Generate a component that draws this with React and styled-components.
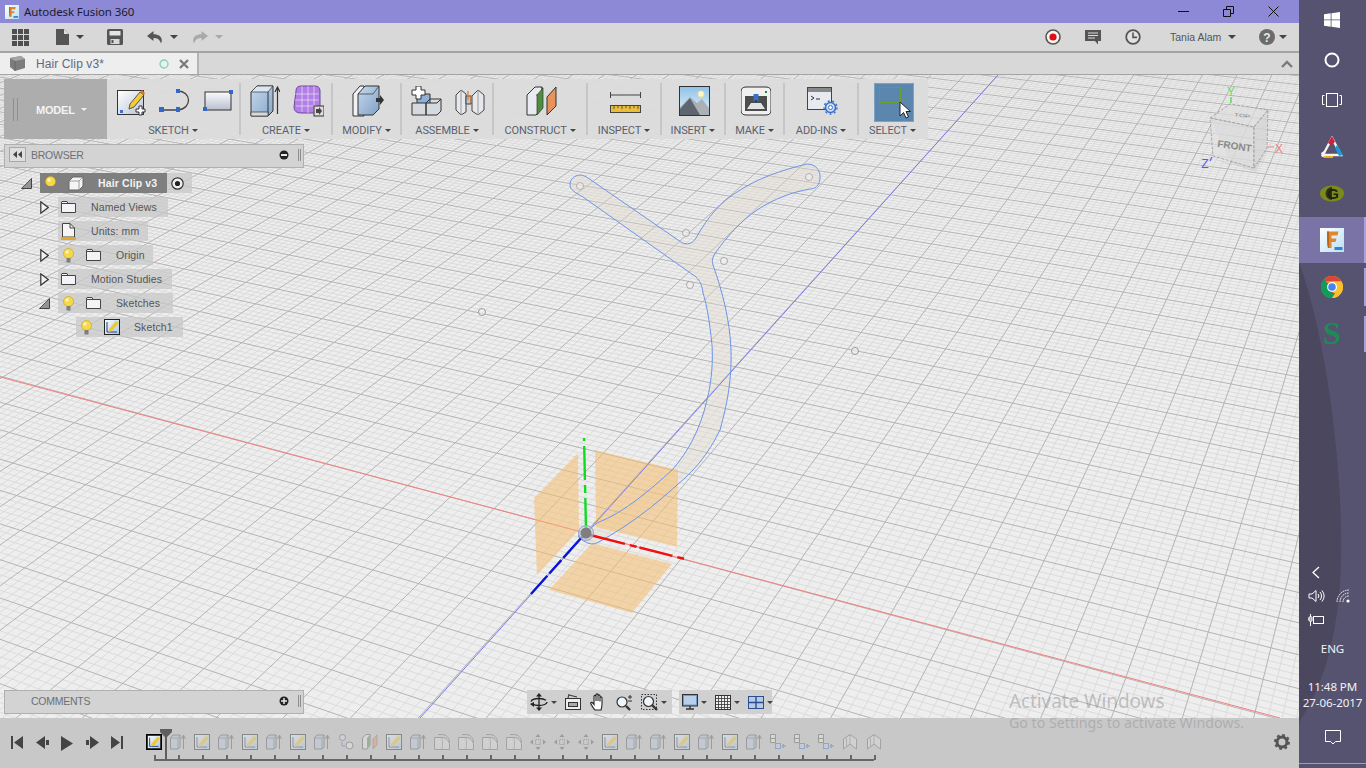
import React, { useMemo } from 'react';
import styled, { createGlobalStyle } from 'styled-components';

const Global = createGlobalStyle`
  html, body { margin: 0; padding: 0; width: 1366px; height: 768px; overflow: hidden; }
  #root { width: 1366px; height: 768px; }
  * { box-sizing: border-box; }
  svg { display: block; flex: none; }
`;

const Screen = styled.div`
  position: relative; width: 1366px; height: 768px; display: flex; overflow: hidden;
  font-family: "Liberation Sans", Arial, sans-serif; background: #eeeeee;
`;
const Main = styled.div`width: 1299px; height: 768px; display: flex; flex-direction: column; flex: none;`;
const TitleBar = styled.div`
  height: 23px; flex: none; background: #8d89d7; display: flex; align-items: center; padding: 0 0 0 5px;
`;
const TitleText = styled.span`
  margin-left: 5px; font-family: "Noto Sans", sans-serif; font-size: 11.5px; letter-spacing: -0.1px; color: #1b1b2a;
`;
const WindowButtons = styled.div`margin-left: auto; display: flex; gap: 34px; padding-right: 20px; align-items: center;`;
const MenuBar = styled.div`
  height: 30px; flex: none; background: #d8d8d8; border-bottom: 2px solid #a4a4a4; display: flex; align-items: center; padding: 0 10px 0 12px;
`;
const MenuGroup = styled.div`
  display: flex; align-items: center; gap: ${p => p.$gap || 6}px; margin-left: ${p => p.$ml || 0}px;
`;
const Caret = styled.i`
  display: block; width: 0; height: 0; flex: none; border-left: ${p => p.$s || 4}px solid transparent; border-right: ${p => p.$s || 4}px solid transparent;
  border-top: ${p => p.$s || 4}px solid ${p => p.$c || '#444'};
`;
const UserName = styled.span`font-size: 10.5px; color: #555; margin-left: 29px; width: 58px; white-space: nowrap;`;
const TabRow = styled.div`
  height: 22px; flex: none; background: #d8d8d8; border-bottom: 1px solid #a4a4a4; display: flex; align-items: stretch; justify-content: space-between; padding-right: 6px;
`;
const Tab = styled.div`
  width: 199px; background: #eeeeee; border-right: 2px solid #b4b4b4; display: flex; align-items: center; padding-left: 9px;
`;
const TabTitle = styled.span`margin-left: 10px; width: 123px; font-size: 12px; letter-spacing: .1px; color: #5f6a80;`;
const TabClose = styled.span`margin-left: 10px;`;
const Chevron = styled.div`display: flex; align-items: center;`;

const Canvas = styled.div`position: relative; flex: 1; overflow: hidden; background: #eeeeee;`;
const Scene = styled.svg`position: absolute; inset: 0;`;

const RibbonPanel = styled.div`
  position: absolute; left: 4px; top: 4px; width: 924px; height: 60px; display: flex; background: rgba(220,220,220,.96);
`;
const ModelBlock = styled.div`
  width: 103px; flex: none; background: #adadad; display: flex; align-items: center; padding: 1px 0 0 9px; color: #f4f4f4;
  font-size: 11px; font-weight: 700; position: relative;
`;
const Grip = styled.i`display: block; width: 5px; height: 23px; border-left: 1px solid #8e8e8e; border-right: 1px solid #8e8e8e; margin-right: 18px;`;
const ModelLabel = styled.span`margin-right: 6px; letter-spacing: -.2px;`;
const ToolGroup = styled.div`
  width: ${p => p.$w}px; flex: none; display: flex; flex-direction: column; align-items: center; position: relative; padding-top: 5px;
  &::after { content: ""; position: absolute; right: 0; top: 4px; bottom: 4px; width: 2px; background: ${p => p.$last ? 'transparent' : '#c6c6c6'}; }
`;
const ToolIcons = styled.div`display: flex; gap: ${p => p.$gap ?? 13}px; height: 34px; align-items: center; padding-left: ${p => p.$pl || 0}px;`;
const ToolLabel = styled.div`
  position: absolute; top: 45px; left: 0; right: 2px; display: flex; justify-content: center; align-items: center; gap: 3px;
  font-family: Roboto, sans-serif; font-size: 11px; letter-spacing: -0.1px; color: #5a5f6e; white-space: nowrap;
`;
const SelectWrap = styled.div`margin-left: 15px; width: 54px; display: flex; flex-direction: column; align-items: flex-start; flex: none;`;
const SelectButton = styled.div`
  width: 40px; height: 39px; background: #5b87ae; border: 1px solid #7da2c2; position: relative; margin-top: -1px; flex: none;
`;
const Marquee = styled.svg`position: absolute; left: 4px; top: 3px;`;
const Cursor = styled.svg`position: absolute; left: 24px; top: 17px;`;

const PanelBar = styled.div`
  position: absolute; left: 4px; width: 300px; height: ${p => p.$h}px; ${p => p.$top != null ? `top:${p.$top}px;` : `bottom:${p.$bottom}px;`}
  background: #d3d3d3; border: 1px solid #b0b0b0; display: flex; align-items: center; padding: 0 2px 3px ${p => p.$pl}px;
  font-size: 10.5px; letter-spacing: -.25px; color: #6b7078;
`;
const BackBtn = styled.span`
  width: 17px; height: 15px; border: 1px solid #a8a8a8; display: flex; align-items: center; justify-content: center; margin-right: 5px; background: #dedede;
`;
const PanelTitle = styled.span`flex: 1;`;
const PanelHandle = styled.i`display: block; width: 3px; height: 12px; margin-left: 9px; border-left: 1px solid #8d8d8d; border-right: 1px solid #8d8d8d;`;
const Tree = styled.div`position: absolute; left: 0; top: 96px; display: flex; flex-direction: column;`;
const TreeRow = styled.div`height: 24px; display: flex; align-items: center; padding-left: ${p => p.$indent}px;`;
const TreeToggle = styled.span`width: ${p => p.$w}px; flex: none; display: flex; padding-left: 0;`;
const TreePill = styled.div`
  height: 20px; display: flex; align-items: center; width: ${p => p.$w}px; background: rgba(200,200,200,.72); position: relative;
`;
const RootPart = styled.div`
  width: 127px; height: 20px; background: #7f7f7f; display: flex; align-items: center; padding-left: 5px; flex: none;
`;
const RootName = styled.span`margin-left: 14px; font-size: 10.5px; letter-spacing: .12px; font-weight: 700; color: #f3f3f3; white-space: nowrap;`;
const TreeLabel = styled.span`
  font-size: 10.5px; letter-spacing: .12px; color: #555; white-space: nowrap; margin-left: ${p => p.$ml}px;
`;
const IconSlot = styled.span`margin-left: ${p => p.$ml}px; display: flex; align-items: center;`;

const NavBars = styled.div`position: absolute; left: 527px; bottom: 4px; display: flex; gap: 7px;`;
const NavGroup = styled.div`
  height: 24px; width: ${p => p.$w}px; background: #d0d0d0; display: flex; align-items: center; padding-left: 3px; gap: ${p => p.$gap}px;
`;
const NavItem = styled.span`display: flex; align-items: center; gap: 3px;`;

const Timeline = styled.div`height: 50px; flex: none; background: #c8c8c8; display: flex; align-items: flex-start; position: relative;`;
const Transport = styled.div`width: 142px; flex: none; display: flex; gap: 12.5px; padding: 18px 0 0 11px;`;
const Track = styled.div`
  display: flex; position: relative; height: 50px;
  &::after { content: ""; position: absolute; left: 12px; top: 41px; width: 720px; height: 2px; background: #666; }
`;
const Step = styled.div`
  width: 24px; height: 50px; padding: 16px 0 0 4px; position: relative; flex: none;
  & > svg { opacity: ${p => p.$active ? 1 : .38}; }
  &::after { content: ""; position: absolute; left: 12px; top: 37px; width: 2px; height: 5px; background: #666; }
`;
const ActiveBox = styled.div`width: 16px; height: 16px; border: 1px solid #000; background: #fff; margin: 0;`;
const Marker = styled.svg`position: absolute; left: 18px; top: 11px;`;
const GearSlot = styled.div`margin-left: auto; padding: 16px 9px 0 0;`;

const Watermark = styled.div`position: absolute; left: 1009px; top: 690px; color: rgba(150,150,155,.55); pointer-events: none;`;
const WatermarkTitle = styled.div`font-family: "Noto Sans", sans-serif; font-size: 19px; line-height: 22px; letter-spacing: -.1px;`;
const WatermarkSub = styled.div`font-family: "Noto Sans", sans-serif; font-size: 14.2px; line-height: 22px;`;

const Taskbar = styled.div`
  width: 67px; flex: none; height: 768px; background: #55536f; position: relative; display: flex; flex-direction: column; overflow: hidden;
  &::before { content: ""; position: absolute; inset: 0; background: #4a475f;
    clip-path: path('M0 262 C 28 340, 44 470, 42 560 C 40 640, 22 690, 0 722 Z'); }
`;
const TaskButton = styled.div`
  height: ${p => p.$h}px; flex: none; display: flex; align-items: center; justify-content: center; position: relative; padding-right: 1px;
  background: ${p => p.$active ? '#7a74a6' : 'transparent'}; margin-top: ${p => p.$mt || 0}px;
  &::after { content: ""; display: ${p => p.$run ? 'block' : 'none'}; position: absolute; right: 0; top: ${p => p.$active ? 0 : 5}px; bottom: ${p => p.$active ? 0 : 5}px; width: 2px; background: #a9a2dc; }
`;
const Tray = styled.div`
  margin-top: auto; margin-bottom: 4px; position: relative; display: flex; flex-direction: column; color: #f2f2f5; padding-bottom: 13px; border-bottom: 1px solid #a09fb2;
`;
const TrayRow = styled.div`height: ${p => p.$h}px; display: flex; align-items: center; justify-content: ${p => p.$pl ? 'flex-start' : 'center'}; padding-left: ${p => p.$pl || 0}px; gap: 11px;`;
const TrayText = styled.div`font-family: "Noto Sans", sans-serif; font-size: 11.6px; line-height: 16px; text-align: center; white-space: nowrap; letter-spacing: -.1px;`;

/* ----- drawings ----- */
const Svg = ({ w, h, vb, children }) => <svg width={w} height={h} viewBox={vb || `0 0 ${w} ${h}`}>{children}</svg>;

const FusionLogo = ({ s = 24 }) => (
  <Svg w={s} h={s} vb="0 0 24 24">
    <defs><linearGradient id={`fl${s}`} x1="0" y1="0" x2="1" y2="1"><stop offset="0" stopColor="#ffffff"/><stop offset="1" stopColor="#b8e0f5"/></linearGradient></defs>
    <rect width="24" height="24" fill={`url(#fl${s})`}/>
    <path d="M7 3.5 L18.5 3.5 L17.5 7.5 L11.5 7.5 L11.5 10.5 L16.5 10.5 L15.5 14 L11.5 14 L11.5 20 L8 20 C7 16, 7 9, 7 3.5Z" fill="#e0862d"/>
    <path d="M7 3.5 L9 3.5 L9 20 L8 20 C7 16,7 9,7 3.5Z" fill="#b9631d"/>
    <rect x="14.5" y="19" width="8" height="3" fill="#2f86c9"/>
  </Svg>
);
const Min = () => <Svg w={11} h={11}><path d="M0 5.5H11" stroke="#111" /></Svg>;
const Restore = () => <Svg w={11} h={11}><path d="M.5 3.5h7v7h-7zM3.5 3V.5h7v7H8" fill="none" stroke="#111"/></Svg>;
const Close = () => <Svg w={11} h={11}><path d="M.5.5l10 10M10.5.5l-10 10" stroke="#111"/></Svg>;
const AppGrid = () => <Svg w={17} h={17}>{[0,6,12].flatMap(x => [0,6,12].map(y => <rect key={x+'-'+y} x={x} y={y} width="5" height="5" fill="#4f4f4f"/>))}</Svg>;
const DocIcon = () => <Svg w={14} h={16}><path d="M0 0h8l5 5v11H0z" fill="#555"/><path d="M8 0v5h5" fill="#ddd"/></Svg>;
const Save = () => <Svg w={16} h={16}><path d="M0 1.5Q0 0 1.5 0h13Q16 0 16 1.5v13q0 1.5-1.5 1.5h-13Q0 16 0 14.5z" fill="#555"/><rect x="2.5" y="2" width="11" height="4.5" fill="#e4e4e4"/><rect x="3.5" y="10" width="9" height="5" fill="#d8d8d8"/><rect x="4.5" y="11" width="2" height="3" fill="#555"/></Svg>;
const Undo = ({ c = '#555', flip }) => <Svg w={16} h={13}><g transform={flip ? 'translate(16,0) scale(-1,1)' : undefined}><path d="M6.5 0 L0 5 L6.5 10 V7 C10 7 12.5 8 14 12.5 C16.5 7 13 3.2 6.5 3.2Z" fill={c}/></g></Svg>;
const Rec = () => <Svg w={16} h={16}><circle cx="8" cy="8" r="7" fill="#f3f3f3" stroke="#555" strokeWidth="1.6"/><circle cx="8" cy="8" r="3.6" fill="#e01010"/></Svg>;
const Bubble = () => <Svg w={16} h={15}><path d="M0 0h16v11h-3v3.5L10 11H0z" fill="#555"/><path d="M3 3h10M3 5.5h10M3 8h7" stroke="#ddd"/></Svg>;
const Clock = () => <Svg w={16} h={16}><circle cx="8" cy="8" r="6.8" fill="#e2e2e2" stroke="#555" strokeWidth="1.8"/><path d="M8 3.6V8.4H12" fill="none" stroke="#555" strokeWidth="1.6"/></Svg>;
const Help = () => <Svg w={16} h={16}><circle cx="8" cy="8" r="8" fill="#6b6b6b"/><text x="8" y="12.5" textAnchor="middle" fontFamily="Liberation Sans" fontWeight="700" fontSize="12" fill="#e8e8e8">?</text></Svg>;
const TabCube = () => <Svg w={17} h={16}><path d="M1 2l11-2 4 3v9l-10 3-5-4z" fill="#7c7c7c"/><path d="M1 2l5 3 10-2-4-3z" fill="#a4a4a4"/><path d="M6 5v10" stroke="#666"/></Svg>;
const SmallX = () => <Svg w={10} h={10}><path d="M1 1l8 8M9 1l-8 8" stroke="#7d7d7d" strokeWidth="2.4"/></Svg>;
const ChevUp = () => <Svg w={12} h={8}><path d="M1 7l5-5 5 5" fill="none" stroke="#7b7b7b" strokeWidth="2.4"/></Svg>;

const SketchCreate = () => <Svg w={30} h={30}><rect x=".5" y="4.5" width="26" height="24" fill="#f2f4f7" stroke="#333"/><defs><linearGradient id="sc" x1="0" y1="0" x2="1" y2="1"><stop offset="0" stopColor="#fff"/><stop offset="1" stopColor="#b9c4d6"/></linearGradient></defs><rect x="1" y="5" width="25" height="23" fill="url(#sc)"/><path d="M13 18 L23 6 L27 9 L17 21 L12 23Z" fill="#f3cb3a" stroke="#333" strokeWidth=".8"/><path d="M23 6l2-2 3 3-1 2z" fill="#d8743a"/><rect x="3" y="24" width="3" height="3" fill="#3d6fd1"/><path d="M22 20h3v3h3v3h-3v3h-3v-3h-3v-3h3z" fill="#fff" stroke="#333"/></Svg>;
const Spline = () => <Svg w={32} h={26}><path d="M4 22H19C34 20 32 3 19 3" fill="none" stroke="#444" strokeWidth="1.3"/><rect x="0" y="19" width="5" height="5" fill="#3467c8"/><rect x="17" y="19" width="4" height="5" fill="#3467c8"/><rect x="17" y="1" width="4" height="4" fill="#3467c8"/></Svg>;
const RectTool = () => <Svg w={30} h={26}><defs><linearGradient id="rt" x1="0" y1="0" x2="0" y2="1"><stop offset="0" stopColor="#fbfbfd"/><stop offset="1" stopColor="#b7bfce"/></linearGradient></defs><rect x="2" y="4" width="26" height="18" fill="url(#rt)" stroke="#333"/><rect x="0" y="19" width="4" height="4" fill="#3467c8"/><rect x="26" y="2" width="4" height="4" fill="#3467c8"/></Svg>;
const Extrude = () => <Svg w={30} h={32}><defs><linearGradient id="ex" x1="0" y1="0" x2="1" y2="1"><stop offset="0" stopColor="#c8d9ec"/><stop offset="1" stopColor="#86a7cc"/></linearGradient></defs><path d="M1 7L7 1H23V26L18 31H1z" fill="url(#ex)" stroke="#333"/><path d="M1 7H18L23 1H7z" fill="#dce6f2" stroke="#333" strokeWidth=".7"/><path d="M18 7V31" stroke="#333"/><path d="M1 27H18V31H1z" fill="#d5d8dd" stroke="#333" strokeWidth=".7"/><path d="M27.500 29V3M25 7l2.500-5 2.500 5" fill="none" stroke="#333" strokeWidth="1.200"/></Svg>;
const FormBox = () => <Svg w={31} h={32}><path d="M3 6Q3 1 8 1H22Q27 1 27 6V24Q27 28 23 28H8Q1 28 1 22z" fill="#b37fe6" stroke="#6e4a9e"/><path d="M2 9H26M2 15H26M3 21H24M9 1V27M15 1V28M21 1V28" stroke="#fff" strokeWidth=".7" fill="none" opacity=".75"/><rect x="21" y="21" width="10" height="10" fill="#dcdcdc" stroke="#333"/><path d="M23 24h3v-2l3 4-3 4v-2h-3z" fill="#444"/></Svg>;
const Press = () => <Svg w={32} h={32}><defs><linearGradient id="pp" x1="0" y1="0" x2="1" y2="1"><stop offset="0" stopColor="#c8d9ec"/><stop offset="1" stopColor="#7ea1c8"/></linearGradient></defs><path d="M1 9L8 1H12V31H1z" fill="#f2f2f2" stroke="#333"/><path d="M6 9L13 1H27V24L21 30H6z" fill="url(#pp)" stroke="#333"/><path d="M6 9H21L27 1" fill="none" stroke="#333" strokeWidth=".7"/><path d="M24 13h4v-3l4 5-4 5v-3h-4z" fill="#333"/></Svg>;
const NewComp = () => <Svg w={31} h={30}><path d="M6 8h13v13H6z" fill="#8cb0d8" stroke="#333"/><path d="M1 17h14v12H1zM15 17h11l4-4v12l-4 4H15z" fill="#d5dade" stroke="#333"/><path d="M15 17L19 13H30" fill="none" stroke="#333"/><path d="M5 0h5v4h4v5h-4v4H5V9H1V4h4z" fill="#fff" stroke="#333"/></Svg>;
const Joint = () => <Svg w={30} h={28}><path d="M1 8L6 3l5 4v18l-5 3-5-5zM17 9l6-6 6 5v15l-6 5-6-4z" fill="#e6e8ec" stroke="#444"/><path d="M11 9h5v8h-5z" fill="#bfc4cc" stroke="#444"/><path d="M6 3v25M23 3v25" stroke="#999"/><path d="M13 4v9M16 8v8" stroke="#e07a28" strokeWidth="1.2"/></Svg>;
const Construct = () => <Svg w={31} h={30}><path d="M1 9L9 1H16V22L10 29H1z" fill="#e8ebef" stroke="#333"/><path d="M10 9h6V1" fill="none" stroke="#333" strokeWidth=".7"/><path d="M11 9L17 2V22L11 29z" fill="#4d8f3e" stroke="#333" strokeWidth=".7"/><path d="M21 11L30 1V20L21 29z" fill="#e7935b" stroke="#333"/></Svg>;
const Measure = () => <Svg w={31} h={25}><path d="M.5 3v6M30.500 3v6M.5 6H30.500" fill="none" stroke="#444"/><rect x=".5" y="16.500" width="30" height="7" fill="#e9bc3c" stroke="#444"/><path d="M4 17v3M8 17v2M12 17v3M16 17v2M20 17v3M24 17v2M28 17v3" stroke="#6a5516"/></Svg>;
const Picture = () => <Svg w={31} h={30}><defs><linearGradient id="pic" x1="0" y1="0" x2="0" y2="1"><stop offset="0" stopColor="#8fc2e8"/><stop offset="1" stopColor="#e8f3fa"/></linearGradient></defs><rect x=".5" y=".5" width="30" height="29" fill="url(#pic)" stroke="#333"/><circle cx="22" cy="8" r="3" fill="#fff6c8" stroke="#f2e4a6"/><path d="M1 29V21L11 11L18 17L23 13L30 22V29Z" fill="#aab0b6"/><path d="M1 29V23L11 12L21 29Z" fill="#5d6570"/></Svg>;
const Printer = () => <Svg w={30} h={30}><path d="M0 6Q0 1 5 1H25Q30 1 30 6V24Q30 29 25 29H5Q0 29 0 24z" fill="#f0f0f0" stroke="#333"/><rect x="4" y="10" width="22" height="15" fill="#4c4c4c"/><path d="M6 23L10 17H20L24 23z" fill="#dfe3e8"/><rect x="12.500" y="8" width="5" height="7" fill="#3a6fc6"/><path d="M14 14h2l-1 3z" fill="#333"/><rect x="24" y="5" width="2" height="2" fill="#1a8a3a"/></Svg>;
const AddIn = () => <Svg w={31} h={28}><rect x=".5" y=".5" width="24" height="22" fill="#e7eaf0" stroke="#444"/><rect x="1" y="1" width="23" height="4" fill="#888"/><path d="M4 9l3 2-3 2M9 12h4" fill="none" stroke="#333"/><circle cx="23.500" cy="20.500" r="5" fill="#cfe0f5" stroke="#3a6fc6" strokeWidth="1.600"/><circle cx="23.500" cy="20.500" r="2" fill="#fff" stroke="#3a6fc6"/><circle cx="23.500" cy="20.500" r="6.500" fill="none" stroke="#3a6fc6" strokeWidth="1.400" strokeDasharray="2 2.500"/></Svg>;

const ArrowLeft = () => <Svg w={10} h={7}><path d="M4 0v7L0 3.500zM9 0v7L5 3.500z" fill="#444"/></Svg>;
const MinusDot = () => <Svg w={10} h={10}><circle cx="5" cy="5" r="4.500" fill="#222"/><rect x="2" y="4" width="6" height="2" fill="#e8e8e8"/></Svg>;
const PlusDot = () => <Svg w={10} h={10}><circle cx="5" cy="5" r="4.500" fill="#222"/><path d="M2 5h6M5 2v6" stroke="#e8e8e8" strokeWidth="1.500"/></Svg>;
const Open = () => <Svg w={11} h={11}><path d="M.5 10.500L10.500.5V10.500z" fill="#d5d5d5" stroke="#444"/><path d="M6 5l4-4v9H1" fill="#777" opacity=".7"/></Svg>;
const Closed = () => <Svg w={9} h={13}><path d="M.8.8V12.200L8.200 6.500z" fill="#f1f1f1" stroke="#333" strokeWidth="1.200"/></Svg>;
const Bulb = () => <Svg w={11} h={15}><circle cx="5.500" cy="5.500" r="5" fill="#f6d94a" stroke="#c49f1e" strokeWidth=".6"/><circle cx="4" cy="4" r="1.700" fill="#fff6b3"/><rect x="3.500" y="10" width="4" height="4.500" fill="#7e7e7e"/></Svg>;
const Cube = () => <Svg w={16} h={15}><path d="M1 5L5 1H15V10L11 14H1z" fill="#f5f5f5" stroke="#666"/><path d="M1 5H11L15 1M11 5V14" fill="none" stroke="#888" strokeWidth=".8"/></Svg>;
const Radio = () => <Svg w={13} h={13}><circle cx="6.500" cy="6.500" r="5.700" fill="#f2f2f2" stroke="#333" strokeWidth="1.200"/><circle cx="6.500" cy="6.500" r="2.600" fill="#222"/></Svg>;
const Folder = () => <Svg w={15} h={12}><path d="M.5 2.500V1L1 .5H6L7 2.500H14.500V11.500H.5z" fill="#f3f4f7" stroke="#444"/><path d="M.5 2.500H7" stroke="#444"/></Svg>;
const UnitsDoc = () => <Svg w={15} h={17}><path d="M1.500.5H9L13.500 5V14H1.500z" fill="#f5f5f5" stroke="#444"/><path d="M9 .5V5H13.500" fill="none" stroke="#444"/><rect y="14" width="15" height="3" fill="#e0a92c"/></Svg>;
const SketchMini = ({ s = 16 }) => <Svg w={s} h={s} vb="0 0 16 16"><defs><linearGradient id="smg" x1="0" y1="0" x2="1" y2="1"><stop offset="0" stopColor="#fff"/><stop offset="1" stopColor="#a8c4e6"/></linearGradient></defs><rect x=".5" y=".5" width="15" height="15" fill="url(#smg)" stroke="#222"/><path d="M3 3V13H13" fill="none" stroke="#1d3f7a" strokeWidth="1"/><path d="M5 10L12 2l3 2-7 8-3.500 1z" fill="#f0c92d"/></Svg>;
const ExtrudeMini = () => <Svg w={16} h={16}><path d="M.5 4L3 1H10V13L8 15H.5z" fill="#b9cde4" stroke="#555"/><path d="M.5 4H8L10 1M8 4V15" fill="none" stroke="#555" strokeWidth=".7"/><path d="M13.500 15V2M11.500 5L13.500 1L15.500 5" fill="none" stroke="#555"/></Svg>;
const HoleMini = () => <Svg w={16} h={16}><circle cx="4.500" cy="3.500" r="3" fill="#ddd" stroke="#555"/><circle cx="11.500" cy="11.500" r="3.500" fill="#eee" stroke="#555"/><path d="M4 8V12H7" fill="none" stroke="#3a6fc6"/></Svg>;
const ConstructMini = () => <Svg w={16} h={16}><path d="M.5 4L4 .5H8V11L5 15H.5z" fill="#eee" stroke="#555"/><path d="M5 4L8 1V11L5 15z" fill="#4d8f3e"/><path d="M11 5L15 1V11L11 15z" fill="#e7935b" stroke="#555" strokeWidth=".6"/></Svg>;
const FilletMini = () => <Svg w={16} h={16}><path d="M.5 3.500H8C12 3.500 15.500 7 15.500 11V15.500H.5z" fill="#dedede" stroke="#666"/><path d="M4 .5H8C13 .5 15.500 5 15.500 8" fill="none" stroke="#666"/><path d="M8 3.500C8 6 9 10 8 15" fill="none" stroke="#888"/></Svg>;
const MoveMini = () => <Svg w={16} h={16}><rect x="5.500" y="5.500" width="5" height="5" fill="none" stroke="#666" strokeDasharray="1.500 1"/><path d="M8 0l2.500 3h-5zM8 16l2.500-3h-5zM0 8l3-2.500v5zM16 8l-3-2.500v5z" fill="#555"/></Svg>;
const CombineMini = () => <Svg w={16} h={16}><path d="M.5.5h5v4h-5zM.5 4.500h5v4h-5z" fill="#eee" stroke="#555"/><rect x="5.500" y="9.500" width="5" height="5" fill="#bcd5ee" stroke="#3a6fc6"/><path d="M12 12h4M14 10l-2 2 2 2" fill="none" stroke="#555"/></Svg>;
const LoftMini = () => <Svg w={16} h={16}><path d="M1.500 15V5L8 .5 14.500 5V15L8 10z" fill="#e0e0e0" stroke="#666"/><path d="M8 .5V10M4.500 12V4" stroke="#888"/></Svg>;

const Orbit = () => <Svg w={18} h={18}><path d="M9 0l3 3.500H6zM9 18l3-3.500H6z" fill="#222"/><path d="M9 3v12" stroke="#222" strokeWidth="1.300"/><ellipse cx="9" cy="9" rx="8" ry="3.500" fill="none" stroke="#222" strokeWidth="1.300" strokeDasharray="16 3"/><path d="M0 11l4-2v5z" fill="#222"/></Svg>;
const LookAt = () => <Svg w={16} h={16}><rect x=".5" y="4.500" width="15" height="11" fill="#eee" stroke="#333"/><rect x="3.500" y="8.500" width="9" height="4" fill="#aaa" stroke="#333"/><path d="M3 4L4 0M4 1l8 2" stroke="#333" fill="none"/></Svg>;
const Hand = () => <Svg w={18} h={18} vb="0 0 18 18"><path d="M5 16C3 13 1 10 2 9.500 3 9 4 10 5 11.500V3.500C5 2 7 2 7 3.500V8V2C7 .5 9 .5 9 2V8V3C9 1.500 11 1.500 11 3V8.500V5C11 3.500 13 3.500 13 5V11C13 14 12.500 15 12 17H6z" fill="#fff" stroke="#222" strokeWidth="1.100"/></Svg>;
const ZoomI = () => <Svg w={18} h={17}><circle cx="7" cy="8" r="5" fill="#eef6fb" stroke="#333" strokeWidth="1.200"/><path d="M11 12l4 4" stroke="#333" strokeWidth="2.400"/><path d="M13 3h4M15 1v4M13 7h4" stroke="#333"/></Svg>;
const Fit = () => <Svg w={17} h={17}><rect x=".5" y=".5" width="15" height="15" fill="none" stroke="#333" strokeDasharray="1.500 1.500"/><circle cx="7.500" cy="7.500" r="5" fill="#eef6fb" stroke="#333" strokeWidth="1.200"/><path d="M11 11l5 5" stroke="#333" strokeWidth="2.400"/></Svg>;
const Display = () => <Svg w={16} h={16}><rect x=".5" y=".5" width="15" height="11.500" fill="#6e9bd0" stroke="#333"/><rect x="2" y="2" width="12" height="8.500" fill="#b7d0ec"/><path d="M4 15h8M8 12v3" stroke="#333" strokeWidth="1.400"/></Svg>;
const GridI = () => <Svg w={16} h={15}><rect x=".5" y=".5" width="15" height="14" fill="#f0f0f0" stroke="#333"/><path d="M3.500 0v15M6.500 0v15M9.500 0v15M12.500 0v15M0 3.500h16M0 6.500h16M0 9.500h16M0 12.500h16" stroke="#333" strokeWidth=".8"/></Svg>;
const Views = () => <Svg w={16} h={13}><rect x=".5" y=".5" width="15" height="12" fill="#b6cbe6" stroke="#2c4d8e"/><path d="M8 0v13M0 6.500h16" stroke="#2c4d8e" strokeWidth="1.400"/></Svg>;

const TFirst = () => <Svg w={12} h={13}><path d="M0 0h2v13H0zM12 0v13L3 6.500z" fill="#444"/></Svg>;
const TPrev = () => <Svg w={13} h={13}><path d="M9 0v13L0 6.500zM10 4h3v5h-3z" fill="#444"/></Svg>;
const TPlay = () => <Svg w={12} h={15}><path d="M0 0L12 7.500 0 15z" fill="#444"/></Svg>;
const TNext = () => <Svg w={13} h={13}><path d="M4 0v13L13 6.500zM0 4h3v5H0z" fill="#444"/></Svg>;
const TLast = () => <Svg w={12} h={13}><path d="M10 0h2v13h-2zM0 0v13L9 6.500z" fill="#444"/></Svg>;
const Gear = () => <Svg w={16} h={16}><circle cx="8" cy="8" r="5" fill="none" stroke="#555" strokeWidth="3"/><circle cx="8" cy="8" r="6.800" fill="none" stroke="#555" strokeWidth="2.400" strokeDasharray="2.700 2.640"/></Svg>;

const WinLogo = () => <Svg w={16} h={16}><path d="M0 2.300L6.700 1.300V7.500H0zM7.500 1.200L16 0V7.500H7.500zM0 8.300H6.700V14.700L0 13.700zM7.500 8.300H16V16L7.500 14.800z" fill="#fff"/></Svg>;
const Cortana = () => <Svg w={16} h={16}><circle cx="8" cy="8" r="6.500" fill="none" stroke="#fff" strokeWidth="2"/></Svg>;
const TaskView = () => <Svg w={20} h={14}><rect x="4.500" y=".5" width="11" height="13" fill="none" stroke="#fff"/><path d="M2.500 2.500H.5V11.500H2.500M17.500 2.500H19.500V11.500H17.500" fill="none" stroke="#fff"/></Svg>;
const Prism = () => <Svg w={22} h={22}><path d="M11 2L2 19H20z" fill="none" stroke="#f3f3f3" strokeWidth="2.400"/><path d="M11 0L7 7 10 9 14 6z" fill="#d11f3a"/><path d="M16 9L22 19 18 20 14 12z" fill="#1a9bd7"/><path d="M1 20H12V22H3z" fill="#f0a81c"/><path d="M0 17l3-2 2 5-4 1z" fill="#f3f3f3"/></Svg>;
const GLogo = () => <Svg w={24} h={17}><ellipse cx="12" cy="8.500" rx="12" ry="8" fill="#7d8a1a"/><path d="M12 2a6.500 6.500 0 0 0 0 13z" fill="#2d3314"/><text x="13" y="14" textAnchor="middle" fontFamily="Liberation Sans" fontWeight="700" fontSize="15" fill="#1e2210">G</text></Svg>;
const Chrome = () => <Svg w={22} h={22} vb="-11 -11 22 22"><circle r="11" fill="#fbc02d"/><path d="M-9.500-5.500A11 11 0 0 1 9.500-5.500L0-5.500z" fill="#db4437"/><path d="M-9.500-5.500A11 11 0 0 0 0 11L3-3z" fill="#db4437"/><path d="M-9.500-5.500L-3.500 3 0 11A11 11 0 0 1-9.500-5.500z" fill="#0f9d58"/><path d="M0 11A11 11 0 0 1-7-8.500L-3 3l3 3 5 0-5 5z" fill="#0f9d58"/><path d="M0 11A11 11 0 0 0 11 0 11 11 0 0 0 9.500-5.500L0-5.500 5 3z" fill="#fbc02d"/><circle r="5" fill="#fff"/><circle r="3.800" fill="#4285f4"/></Svg>;
const SLogo = () => <Svg w={24} h={40}><text x="12" y="30" textAnchor="middle" fontFamily="Liberation Serif" fontWeight="700" fontSize="32" fill="#1f8a55">S</text></Svg>;
const ChevL = () => <Svg w={9} h={13}><path d="M8 1L2 6.500 8 12" fill="none" stroke="#fff" strokeWidth="1.300"/></Svg>;
const Speaker = () => <Svg w={17} h={14}><path d="M1 5H4L8 1.500V12.500L4 9H1z" fill="none" stroke="#fff"/><path d="M10 5a3 3 0 0 1 0 4M12 3a6 6 0 0 1 0 8M14 1.500a9 9 0 0 1 0 11" fill="none" stroke="#fff"/></Svg>;
const Wifi = () => <Svg w={14} h={14}><path d="M1 13A12 12 0 0 1 13 1M4 13A9 9 0 0 1 13 4M7 13A6 6 0 0 1 13 7" fill="none" stroke="#fff" strokeDasharray="1.600 .8"/><circle cx="12" cy="12" r="1.600" fill="#fff"/></Svg>;
const Battery = () => <Svg w={16} h={12}><rect x="5.500" y="2.500" width="10" height="7" fill="none" stroke="#fff"/><path d="M0 5h4M2.500 0v3M1 3h3v4H1zM2.500 7v5" stroke="#fff" fill="none"/></Svg>;
const Notify = () => <Svg w={16} h={15}><path d="M.5.5H15.500V11.500H10.500L8 14 5.500 11.500H.5z" fill="none" stroke="#fff"/></Svg>;

/* ----- viewport drawing: a perspective ground grid ----- */
const O = [585, 533], V1 = [-2850, -388], V2 = [1568, -557];
const proj = (p, q) => { const d = 1 + p + q; return [(O[0] + p * V1[0] + q * V2[0]) / d, (O[1] + p * V1[1] + q * V2[1]) / d]; };
const clip = (a, b) => {
  const X0 = -2, X1 = 1302, Y0 = 73, Y1 = 720; let t0 = 0, t1 = 1;
  const dx = b[0] - a[0], dy = b[1] - a[1];
  for (const [pp, qq] of [[-dx, a[0] - X0], [dx, X1 - a[0]], [-dy, a[1] - Y0], [dy, Y1 - a[1]]]) {
    if (pp === 0) { if (qq < 0) return null; continue; }
    const r = qq / pp;
    if (pp < 0) { if (r > t1) return null; if (r > t0) t0 = r; } else { if (r < t0) return null; if (r < t1) t1 = r; }
  }
  return `M${(a[0] + t0 * dx).toFixed(1)} ${(a[1] + t0 * dy).toFixed(1)}L${(a[0] + t1 * dx).toFixed(1)} ${(a[1] + t1 * dy).toFixed(1)}`;
};
const buildGrid = () => {
  const sp = 0.0136, sq = 0.0225, n = 5; let minor = '', major = '';
  const emit = (famP, k, step) => {
    const val = k * step;
    const a = famP ? proj(val, -0.745 - val) : proj(-0.745 - val, val);
    const b = famP ? proj(val, 300) : proj(300, val);
    const s = clip(a, b);
    if (!s) return;
    if (k % n === 0) major += s; else minor += s;
  };
  for (let k = -220; k < 1400; k++) emit(true, k, sp / n);
  for (let k = -200; k < 1000; k++) emit(false, k, sq / n);
  return { minor, major };
};

const shapePath = 'M570 185C570 176 580 172 588 178L678 240C684 245 691 246 696 238C708 216 722 201 737 192C758 178 782 170 807 164C816 164 821 171 820 179C819 186 815 189 810 189C792 192 774 199 757 210C742 220 727 236 714 255C712 259 712 262 713 265C722 290 730 320 731 350C732 380 727 405 720 430C708 455 693 472 677 485C655 505 630 525 597 543C590 546 582 541 578 536C584 531 590 530 597 523C625 512 650 490 672 470C688 452 700 430 707 400C712 380 713 360 712 345C710 325 707 305 703 293C702 285 700 281 696 277L583 197C576 193 570 190 570 185Z';

const Viewport = () => {
  const g = useMemo(buildGrid, []);
  const dots = [[580,186,'#b0b0b0'],[686,233,'#aaa'],[724,261,'#aaa'],[690,285,'#aaa'],[809,177,'#b0b0b0'],[482,312,'#999'],[855,351,'#999']];
  return (
    <Scene width="1299" height="643" viewBox="0 75 1299 643">
      <path d={g.minor} stroke="#d9d9d9" strokeWidth=".9" fill="none"/>
      <path d={g.major} stroke="#b4b4b4" strokeWidth="1" fill="none"/>
      <path d="M0 377L1280 718" stroke="#f58080" strokeWidth="1"/>
      <path d={shapePath} fill="rgba(226,214,200,.35)" stroke="none"/>
      <path d="M534 498L578 453L579 530L537 575Z" fill="rgba(245,190,110,.55)"/>
      <path d="M595 450L678 470L677 547L596 527Z" fill="rgba(245,190,110,.55)"/>
      <path d="M592 543L672 564L632 613L549 590Z" fill="rgba(245,190,110,.55)"/>
      <path d="M420 718L998 75" stroke="#7b7be6" strokeWidth="1"/>
      <path d={shapePath} fill="none" stroke="#6d95e8" strokeWidth="1"/>
      {dots.map(([x,y,c]) => <circle key={x} cx={x} cy={y} r="3.500" fill="rgba(244,244,244,.55)" stroke={c}/>)}
      <path d="M586 530L584 436" stroke="#0fdc1f" strokeWidth="2.400" strokeDasharray="32 5 8 5 34 5 3"/>
      <path d="M590 535L685 559" stroke="#f01010" strokeWidth="2.400" strokeDasharray="36 5 7 3 34 5 7"/>
      <path d="M582 537L531 594" stroke="#0a14d8" strokeWidth="2.400" strokeDasharray="28 3 18 3 30"/>
      <circle cx="586" cy="533" r="7.500" fill="rgba(200,205,215,.6)" stroke="#8fa3cc"/>
      <circle cx="586" cy="533" r="5.500" fill="#7f7f7f"/>
      <g>
        <path d="M1231 97V103" stroke="#7ae07a" strokeWidth="2"/>
        <text x="1231" y="96" textAnchor="middle" fontFamily="Liberation Sans" fontSize="12" fill="#62e062">Y</text>
        <path d="M1266 147H1274" stroke="#f2a0a0" strokeWidth="1.500"/>
        <text x="1279" y="153" textAnchor="middle" fontFamily="Liberation Sans" fontSize="12" fill="#f08080">X</text>
        <path d="M1212 157L1210 161" stroke="#6a6af0" strokeWidth="1.500"/>
        <text x="1205" y="168" textAnchor="middle" fontFamily="Liberation Sans" fontSize="12" fill="#5a5af0">Z</text>
        <path d="M1232 166L1210 157 1256 172 1266 152 1268 110 1230 104 1210 118Z" fill="rgba(150,150,150,.2)"/>
        <path d="M1210 118L1230 104 1268 110 1254 127Z" fill="rgba(232,232,232,.6)" stroke="#999" strokeDasharray="3 1.500" strokeWidth=".8"/>
        <path d="M1210 118L1254 127 1254 168 1213 156Z" fill="rgba(224,224,224,.72)" stroke="#999" strokeDasharray="3 1.500" strokeWidth=".8"/>
        <path d="M1254 127L1268 110 1267 148 1254 168Z" fill="rgba(218,218,218,.72)" stroke="#999" strokeDasharray="3 1.500" strokeWidth=".8"/>
        <text transform="translate(1217 147) rotate(8)" fontFamily="Liberation Sans" fontWeight="700" fontSize="10" fill="#8a8a8a">FRONT</text>
        <text transform="translate(1234 116) rotate(8) scale(1 .6)" fontFamily="Liberation Sans" fontSize="8" fill="#8a8a8a">TOP</text>
      </g>
    </Scene>
  );
};

const sequence = ['sk','ex','sk','ex','sk','ex','sk','ex','ho','co','sk','ex','fi','fi','fi','fi','mo','mo','mo','sk','ex','ex','sk','ex','sk','ex','cb','cb','cb','lo','lo'];
const stepIcon = { sk: () => <SketchMini/>, ex: () => <ExtrudeMini/>, ho: () => <HoleMini/>, co: () => <ConstructMini/>, fi: () => <FilletMini/>, mo: () => <MoveMini/>, cb: () => <CombineMini/>, lo: () => <LoftMini/> };

const Label = ({ children }) => <ToolLabel>{children}<Caret $s={3} $c="#444"/></ToolLabel>;

const rows = [
  { indent: 40, w: 110, label: 'Named Views', icons: [<Folder key="f"/>], ml: 15, first: 3, expand: 'closed' },
  { indent: 58, w: 90, label: 'Units: mm', icons: [<UnitsDoc key="u"/>], ml: 15, first: 3 },
  { indent: 40, w: 95, label: 'Origin', bulb: true, icons: [<Folder key="f"/>], ml: 15, first: 5, expand: 'closed' },
  { indent: 40, w: 114, label: 'Motion Studies', icons: [<Folder key="f"/>], ml: 15, first: 3, expand: 'closed' },
  { indent: 39, w: 115, label: 'Sketches', bulb: true, icons: [<Folder key="f"/>], ml: 15, first: 5, expand: 'open' },
  { indent: 76, w: 107, label: 'Sketch1', bulb: true, icons: [<SketchMini key="s"/>], ml: 14, first: 5 },
];

export default function App() {
  return (
    <Screen>
      <Global/>
      <Main>
        <TitleBar>
          <FusionLogo s={14}/>
          <TitleText>Autodesk Fusion 360</TitleText>
          <WindowButtons><Min/><Restore/><Close/></WindowButtons>
        </TitleBar>
        <MenuBar>
          <AppGrid/>
          <MenuGroup $ml={27}><DocIcon/><Caret/></MenuGroup>
          <MenuGroup $ml={23}><Save/></MenuGroup>
          <MenuGroup $ml={24} $gap={7}><Undo/><Caret/></MenuGroup>
          <MenuGroup $ml={14} $gap={7}><Undo c="#a9a9a9" flip/><Caret $c="#a9a9a9"/></MenuGroup>
          <MenuGroup $ml={822}><Rec/></MenuGroup>
          <MenuGroup $ml={24}><Bubble/></MenuGroup>
          <MenuGroup $ml={24}><Clock/></MenuGroup>
          <UserName>Tania Alam</UserName>
          <Caret/>
          <MenuGroup $ml={23} $gap={4}><Help/><Caret/></MenuGroup>
        </MenuBar>
        <TabRow>
          <Tab>
            <TabCube/>
            <TabTitle>Hair Clip v3*</TabTitle>
            <Svg w={10} h={10}><circle cx="5" cy="5" r="4" fill="none" stroke="#7fd0bd" strokeWidth="1.300"/></Svg>
            <TabClose><SmallX/></TabClose>
          </Tab>
          <Chevron><ChevUp/></Chevron>
        </TabRow>
        <Canvas>
          <Viewport/>
          <RibbonPanel>
            <ModelBlock><Grip/><ModelLabel>MODEL</ModelLabel><Caret $s={3} $c="#f2f2f2"/></ModelBlock>
            <ToolGroup $w={134}><ToolIcons $gap={12} $pl={1}><SketchCreate/><Spline/><RectTool/></ToolIcons><Label>SKETCH</Label></ToolGroup>
            <ToolGroup $w={92}><ToolIcons><Extrude/><FormBox/></ToolIcons><Label>CREATE</Label></ToolGroup>
            <ToolGroup $w={69}><ToolIcons><Press/></ToolIcons><Label>MODIFY</Label></ToolGroup>
            <ToolGroup $w={92}><ToolIcons><NewComp/><Joint/></ToolIcons><Label>ASSEMBLE</Label></ToolGroup>
            <ToolGroup $w={94}><ToolIcons><Construct/></ToolIcons><Label>CONSTRUCT</Label></ToolGroup>
            <ToolGroup $w={74}><ToolIcons><Measure/></ToolIcons><Label>INSPECT</Label></ToolGroup>
            <ToolGroup $w={64}><ToolIcons><Picture/></ToolIcons><Label>INSERT</Label></ToolGroup>
            <ToolGroup $w={59}><ToolIcons><Printer/></ToolIcons><Label>MAKE</Label></ToolGroup>
            <ToolGroup $w={74}><ToolIcons><AddIn/></ToolIcons><Label>ADD-INS</Label></ToolGroup>
            <ToolGroup $w={69} $last>
              <SelectWrap>
                <SelectButton>
                  <Marquee width="22" height="16" viewBox="0 0 22 16"><rect x=".5" y=".5" width="21" height="15" fill="none" stroke="#6ca02c"/></Marquee>
                  <Cursor width="12" height="18" viewBox="0 0 12 18"><path d="M1 1V15L4.500 11.500 7 17 9.500 16 7 10.500H11.500Z" fill="#fff" stroke="#222"/></Cursor>
                </SelectButton>
              </SelectWrap>
              <Label>SELECT</Label>
            </ToolGroup>
          </RibbonPanel>

          <PanelBar $top={69} $h={24} $pl={4}>
            <BackBtn><ArrowLeft/></BackBtn>
            <PanelTitle>BROWSER</PanelTitle>
            <MinusDot/><PanelHandle/>
          </PanelBar>
          <Tree>
            <TreeRow $indent={21}>
              <TreeToggle $w={19}><Open/></TreeToggle>
              <TreePill $w={152}>
                <RootPart><Bulb/><IconSlot $ml={12}><Cube/></IconSlot><RootName>Hair Clip v3</RootName></RootPart>
                <IconSlot $ml={4}><Radio/></IconSlot>
              </TreePill>
            </TreeRow>
            {rows.map(r => (
              <TreeRow key={r.label} $indent={r.indent}>
                {r.expand && <TreeToggle $w={r.expand === 'open' ? 19 : 18}>{r.expand === 'open' ? <Open/> : <Closed/>}</TreeToggle>}
                <TreePill $w={r.w}>
                  {r.bulb && <IconSlot $ml={r.first}><Bulb/></IconSlot>}
                  <IconSlot $ml={r.bulb ? 12 : r.first}>{r.icons}</IconSlot>
                  <TreeLabel $ml={r.ml}>{r.label}</TreeLabel>
                </TreePill>
              </TreeRow>
            ))}
          </Tree>

          <PanelBar $bottom={4} $h={24} $pl={26}>
            <PanelTitle>COMMENTS</PanelTitle>
            <PlusDot/><PanelHandle/>
          </PanelBar>

          <NavBars>
            <NavGroup $w={145} $gap={8}>
              <NavItem><Orbit/><Caret $s={3}/></NavItem>
              <LookAt/><Hand/><ZoomI/>
              <NavItem><Fit/><Caret $s={3}/></NavItem>
            </NavGroup>
            <NavGroup $w={93} $gap={8}>
              <NavItem><Display/><Caret $s={3}/></NavItem>
              <NavItem><GridI/><Caret $s={3}/></NavItem>
              <NavItem><Views/><Caret $s={3}/></NavItem>
            </NavGroup>
          </NavBars>
        </Canvas>
        <Timeline>
          <Transport><TFirst/><TPrev/><TPlay/><TNext/><TLast/></Transport>
          <Track>
            {sequence.map((k, i) => {
              const I = stepIcon[k];
              return <Step key={i} $active={i === 0}>{i === 0 ? <ActiveBox><SketchMini s={14}/></ActiveBox> : <I/>}</Step>;
            })}
            <Marker width="12" height="33" viewBox="0 0 12 33"><path d="M0 0H12V3L7 8V31H5V8L0 3Z" fill="#5e5e5e"/></Marker>
          </Track>
          <GearSlot><Gear/></GearSlot>
        </Timeline>
      </Main>
      <Taskbar>
        <TaskButton $h={40}><WinLogo/></TaskButton>
        <TaskButton $h={40}><Cortana/></TaskButton>
        <TaskButton $h={40}><TaskView/></TaskButton>
        <TaskButton $h={47} $mt={3}><Prism/></TaskButton>
        <TaskButton $h={47}><GLogo/></TaskButton>
        <TaskButton $h={46} $active $run><FusionLogo s={24}/></TaskButton>
        <TaskButton $h={48} $run><Chrome/></TaskButton>
        <TaskButton $h={46} $run><SLogo/></TaskButton>
        <Tray>
          <TrayRow $h={24} $pl={12}><ChevL/></TrayRow>
          <TrayRow $h={24} $pl={9}><Speaker/><Wifi/></TrayRow>
          <TrayRow $h={24} $pl={9}><Battery/></TrayRow>
          <TrayRow $h={34}><TrayText>ENG</TrayText></TrayRow>
          <TrayRow $h={58}><TrayText>11:48 PM<br/>27-06-2017</TrayText></TrayRow>
          <TrayRow $h={26}><Notify/></TrayRow>
        </Tray>
      </Taskbar>
      <Watermark>
        <WatermarkTitle>Activate Windows</WatermarkTitle>
        <WatermarkSub>Go to Settings to activate Windows.</WatermarkSub>
      </Watermark>
    </Screen>
  );
}
